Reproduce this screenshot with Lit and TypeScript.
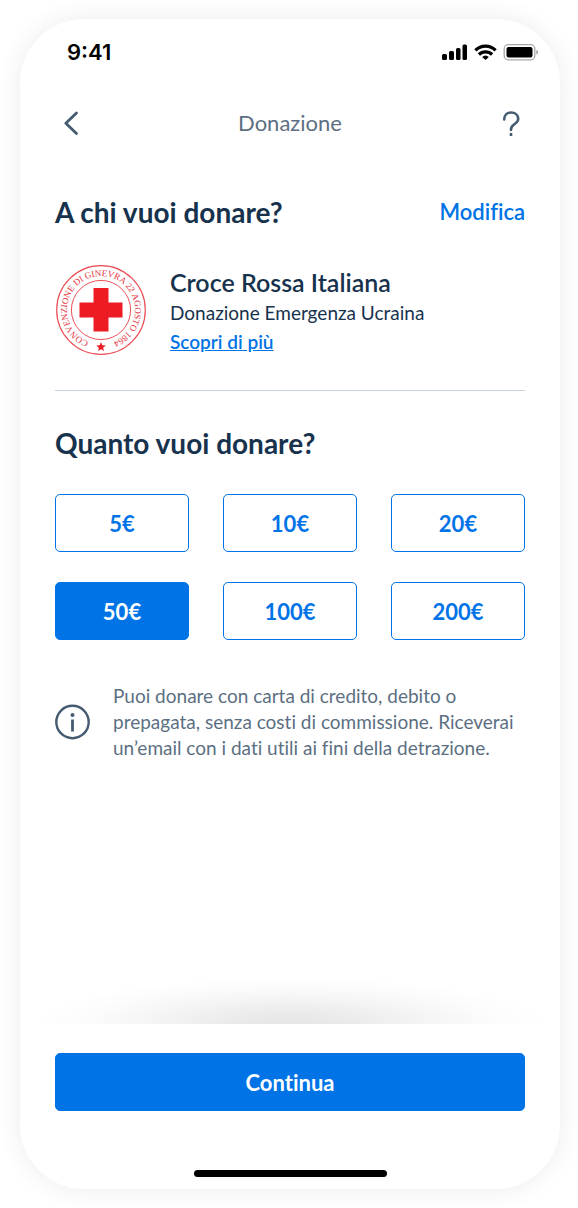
import { LitElement, html, css } from "lit";
import { customElement, state } from "lit/decorators.js";

@customElement("status-bar")
class StatusBar extends LitElement {
  static styles = css`
    :host {
      display: flex;
      align-items: center;
      justify-content: space-between;
      height: 66px;
      padding: 0 22px 0 47px;
      color: #000;
      font: 600 22px/28px Inter, "Liberation Sans", sans-serif;
    }
    svg {
      display: block;
    }
  `;

  render() {
    return html`
      <span>9:41</span>
      <svg width="96" height="20" viewBox="0 0 96 20" aria-hidden="true">
        <rect x="0" y="12" width="5" height="6" rx="1.5" />
        <rect x="7" y="9" width="5" height="9" rx="1.5" />
        <rect x="14" y="6" width="4.5" height="12" rx="1.5" />
        <rect x="20.5" y="2.5" width="4.5" height="15.5" rx="1.5" />
        <g fill="none" stroke="#000" stroke-width="3.2">
          <path d="M33.400 8.400a14.200 14.200 0 0 1 20.200 0" />
          <path d="M36.900 12.500a9.400 9.400 0 0 1 13.200 0" />
        </g>
        <path d="M43.500 18l-3.400-3a5 5 0 0 1 6.800 0z" />
        <rect x="62.2" y="2.7" width="30.6" height="15.1" rx="4" fill="none" stroke="#a9a9a9" stroke-width="1.3" />
        <rect x="64.5" y="5" width="26" height="10.5" rx="2" />
        <path d="M94.300 7.800v5q1.700-.7 1.700-2.500t-1.700-2.500z" fill="#a0a0a0" />
      </svg>
    `;
  }
}

@customElement("red-cross-seal")
class RedCrossSeal extends LitElement {
  static styles = css`
    :host {
      display: block;
      flex: none;
      width: 92px;
      height: 92px;
    }
    .motto {
      font: 9px "Liberation Serif", serif;
      fill: #e5323a;
    }
  `;

  render() {
    return html`
      <svg width="92" height="92" viewBox="0 0 92 92" role="img" aria-label="Croce Rossa Italiana">
        <defs>
          <path id="ring" d="M46 80a34 34 0 0 1 0-68a34 34 0 0 1 0 68" />
        </defs>
        <circle cx="46" cy="46" r="44.3" fill="#fff" stroke="#ea5057" stroke-width="1.2" />
        <circle cx="46" cy="46" r="29.6" fill="none" stroke="#ea5057" stroke-width="1" />
        <text class="motto"><textPath href="#ring" startOffset="50%" text-anchor="middle">CONVENZIONE DI GINEVRA 22 AGOSTO 1864</textPath></text>
        <path d="M38.500 24h15v14.500h14v15h-14v14h-15v-14h-14v-15h14z" fill="#ed1c24" />
        <path d="M46 78l1.300 3.300 3.500.2-2.700 2.200.9 3.400-3-1.900-3 1.900.9-3.400-2.700-2.200 3.500-.2z" fill="#ed1c24" />
      </svg>
    `;
  }
}

@customElement("app-root")
class AppRoot extends LitElement {
  static styles = css`
    :host {
      display: block;
      box-sizing: border-box;
      min-height: 100vh;
      padding: 19px 18px 19px 20px;
      background: #fff;
      color: #17324d;
      font: 19px/26px Lato, "Open Sans", sans-serif;
      font-variant-ligatures: none;
    }
    * {
      box-sizing: border-box;
    }
    .phone {
      display: flex;
      flex-direction: column;
      min-height: calc(100vh - 38px);
      border-radius: 64px;
      background: #fff;
      box-shadow: 0 0 26px rgba(0, 0, 0, 0.08);
    }
    button {
      font: inherit;
      font-variant-ligatures: none;
      cursor: pointer;
    }
    h1,
    h2,
    h3,
    p {
      margin: 0;
    }
    .nav {
      display: flex;
      align-items: center;
      justify-content: space-between;
      height: 76px;
      padding: 0 35px;
      color: #5c6f82;
    }
    .nav h1 {
      font-size: 22px;
      font-weight: 400;
    }
    .icon {
      display: flex;
      padding: 0;
      border: 0;
      background: none;
    }
    main {
      display: flex;
      flex: 1;
      flex-direction: column;
      padding: 31px 35px 0;
    }
    .heading {
      display: flex;
      align-items: center;
      justify-content: space-between;
    }
    h2 {
      font-size: 28px;
      line-height: 40px;
      font-weight: 700;
    }
    a {
      color: #0073e6;
      font-weight: 600;
    }
    .edit {
      font-size: 22px;
      text-decoration: none;
    }
    .payee {
      display: flex;
      align-items: center;
      gap: 23px;
      padding: 32px 0 34px;
      border-bottom: 1px solid #c8d0da;
    }
    .details {
      padding-top: 2px;
    }
    .payee h3 {
      font-size: 25px;
      line-height: 32px;
      font-weight: 600;
    }
    .payee p {
      line-height: 29px;
    }
    .amount-title {
      margin: 32px 0 31px;
    }
    .amounts {
      display: grid;
      grid-template-columns: repeat(3, 1fr);
      gap: 30px 34px;
    }
    .amount,
    .continue {
      height: 58px;
      padding: 2px 0 0;
      border: 1px solid #0073e6;
      border-radius: 5px;
      background: #fff;
      color: #0073e6;
      font-size: 22px;
      font-weight: 700;
    }
    .amount.selected,
    .continue {
      background: #0073e6;
      color: #fff;
    }
    .info {
      display: flex;
      align-items: center;
      gap: 22px;
      margin-top: 43px;
      color: #5c6f82;
    }
    .info svg {
      flex: none;
    }
    .shade {
      height: 48px;
      background: radial-gradient(
        ellipse 48% 100% at 50% 100%,
        rgba(0, 0, 0, 0.1),
        rgba(0, 0, 0, 0.08) 25%,
        rgba(0, 0, 0, 0.04) 55%,
        rgba(0, 0, 0, 0.01) 80%,
        transparent
      );
    }
    footer {
      display: flex;
      flex-direction: column;
      align-items: center;
      padding: 29px 35px 12px;
    }
    .continue {
      width: 100%;
    }
    .home {
      width: 193px;
      height: 7px;
      margin-top: 59px;
      border-radius: 4px;
      background: #000;
    }
  `;

  @state() private selected = 50;

  private amounts = [5, 10, 20, 50, 100, 200];

  render() {
    return html`
      <div class="phone">
        <status-bar></status-bar>
        <header class="nav">
          <button class="icon" aria-label="Indietro">
            <svg width="32" height="32" viewBox="0 0 32 32" fill="none" stroke="#455b71" stroke-width="2.800" stroke-linecap="round" stroke-linejoin="round">
              <path d="M21.500 6L10.800 16.200l10.700 10.300" />
            </svg>
          </button>
          <h1>Donazione</h1>
          <button class="icon" aria-label="Aiuto">
            <svg width="32" height="32" viewBox="0 0 32 32" fill="none" stroke="#455b71" stroke-width="2.600">
              <path d="M11.200 12.500c0-4.500 2.800-7 6.800-7s7.200 2.500 7.200 6.500c0 5-7.200 5-7.200 10.200v.8" stroke-linecap="round" />
              <path d="M18 26v3" />
            </svg>
          </button>
        </header>
        <main>
          <div class="heading">
            <h2>A chi vuoi donare?</h2>
            <a class="edit" href="#modifica">Modifica</a>
          </div>
          <section class="payee">
            <red-cross-seal></red-cross-seal>
            <div class="details">
              <h3>Croce Rossa Italiana</h3>
              <p>Donazione Emergenza Ucraina</p>
              <p><a href="#dettagli">Scopri di più</a></p>
            </div>
          </section>
          <h2 class="amount-title">Quanto vuoi donare?</h2>
          <div class="amounts">
            ${this.amounts.map(
              (value) => html`
                <button
                  class="amount ${value === this.selected ? "selected" : ""}"
                  aria-pressed=${value === this.selected ? "true" : "false"}
                  @click=${() => (this.selected = value)}
                >${value}€</button>
              `
            )}
          </div>
          <div class="info">
            <svg width="36" height="36" viewBox="0 0 36 36" fill="none" stroke="#455b71" aria-hidden="true">
              <circle cx="17.500" cy="18" r="16.200" stroke-width="2.400" />
              <path d="M17.500 15.500v12" stroke-width="2.800" />
              <circle cx="17.500" cy="11" r="2" fill="#455b71" stroke="none" />
            </svg>
            <p>Puoi donare con carta di credito, debito o prepagata, senza costi di commissione. Riceverai un’email con i dati utili ai fini della detrazione.</p>
          </div>
        </main>
        <div class="shade"></div>
        <footer>
          <button class="continue">Continua</button>
          <div class="home"></div>
        </footer>
      </div>
    `;
  }
}
